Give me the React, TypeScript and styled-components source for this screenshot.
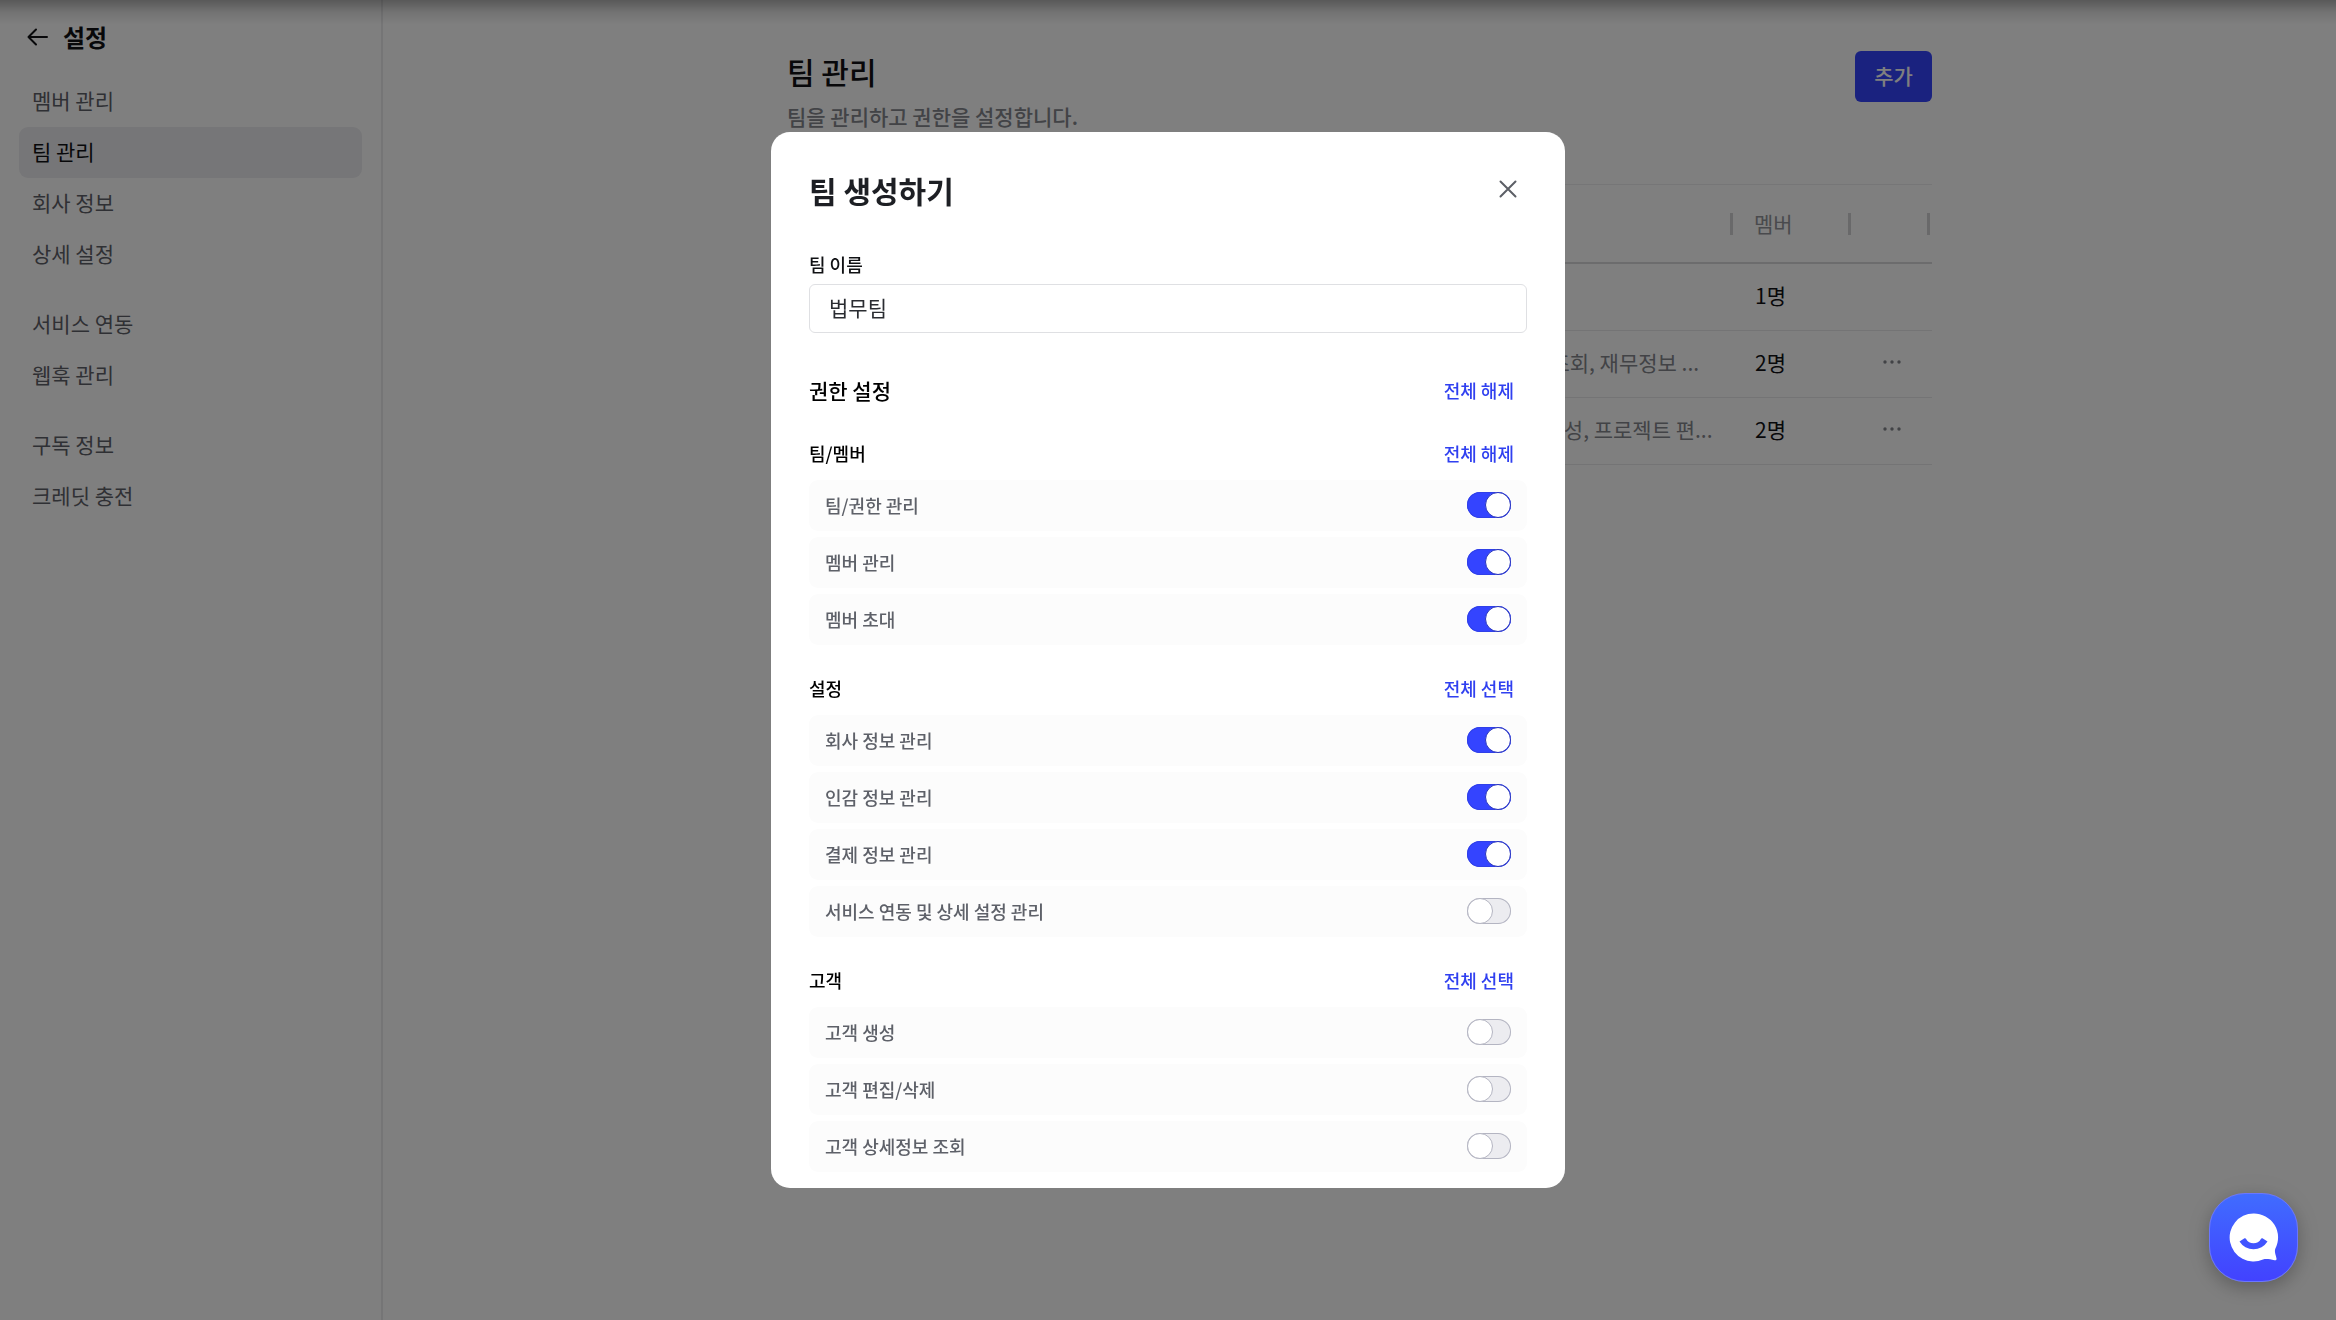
import React, { useState } from "react";
import styled, { createGlobalStyle } from "styled-components";

const GlobalStyle = createGlobalStyle`
  *, *::before, *::after { box-sizing: border-box; }
  body {
    margin: 0;
    background: #fff;
    color: #101114;
    font-family: "Noto Sans CJK KR", sans-serif;
    font-size: 21px;
    line-height: 30px;
    overflow: hidden;
  }
  h1, h2, h3, p, ul { margin: 0; padding: 0; }
  button, input { font: inherit; color: inherit; }
  button { border: 0; background: none; padding: 0; cursor: pointer; }
`;

const Page = styled.div`
  display: flex;
  min-height: 100vh;
`;

const Sidebar = styled.aside`
  flex: none;
  width: 383px;
  border-right: 2px solid #ebebed;
`;

const SidebarHeader = styled.header`
  display: flex;
  align-items: center;
  gap: 8px;
  height: 76px;
  padding: 0 21px 2px;
`;

const BackButton = styled.button`
  display: grid;
  place-items: center;
  width: 34px;
  height: 36px;
`;

const SidebarTitle = styled.h2`
  font-size: 24px;
  line-height: 36px;
  font-weight: 700;
`;

const Nav = styled.nav`
  display: flex;
  flex-direction: column;
  gap: 19px;
  padding: 0 19px;
`;

const NavGroup = styled.ul`
  list-style: none;
`;

const NavLink = styled.a<{ $active?: boolean }>`
  display: flex;
  align-items: center;
  height: 51px;
  padding: 0 13px 4px;
  border-radius: 9px;
  text-decoration: none;
  color: ${(p) => (p.$active ? "#101114" : "#5f6169")};
  background: ${(p) => (p.$active ? "#ededf0" : "transparent")};
`;

const Main = styled.main`
  flex: 1;
  min-width: 0;
  padding: 50px 24px 0;
`;

const Content = styled.div`
  max-width: 1145px;
  margin: 0 auto;
`;

const PageHeader = styled.header`
  display: flex;
  align-items: flex-start;
  justify-content: space-between;
  height: 134px;
`;

const PageTitle = styled.h1`
  font-size: 30px;
  line-height: 43px;
  font-weight: 500;
`;

const Description = styled.p`
  line-height: 46px;
  font-weight: 500;
  color: #84868d;
`;

const PrimaryButton = styled.button`
  width: 77px;
  height: 51px;
  margin-top: 1px;
  padding-bottom: 4px;
  border-radius: 6px;
  background: #3444ff;
  color: #fff;
  font-weight: 500;
`;

const Table = styled.table`
  width: 100%;
  table-layout: fixed;
  border-collapse: separate;
  border-spacing: 0;
  border-top: 1px solid #ececee;
`;

const HeadCell = styled.th<{ $width?: number }>`
  position: relative;
  width: ${(p) => (p.$width ? `${p.$width}px` : "auto")};
  height: 79px;
  padding: 0 19px 2px;
  border-bottom: 2px solid #d8d8db;
  text-align: left;
  font-weight: 400;
  color: #93959b;
  &::after {
    content: "";
    position: absolute;
    top: 28px;
    right: 2px;
    width: 3px;
    height: 22px;
    background: #d2d2d5;
  }
`;

const Cell = styled.td<{ $muted?: boolean }>`
  height: 67px;
  padding: 0 20px 4px;
  border-bottom: 1px solid #e8e8eb;
  white-space: nowrap;
  color: ${(p) => (p.$muted ? "#84868d" : "#101114")};
`;

const MoreButton = styled.button`
  display: grid;
  place-items: center;
  width: 38px;
  height: 38px;
  color: #84868d;
`;

const Overlay = styled.div`
  position: fixed;
  inset: 0;
  display: grid;
  place-items: center;
  background: rgba(0, 0, 0, 0.5);
  &::before {
    content: "";
    position: absolute;
    inset: 0 0 auto;
    height: 24px;
    background: linear-gradient(rgba(0, 0, 0, 0.3), rgba(0, 0, 0, 0.1) 50%, transparent);
  }
`;

const Dialog = styled.section`
  width: 794px;
  max-width: 100%;
  height: 80vh;
  padding: 36px 38px 16px;
  border-radius: 19px;
  background: #fff;
  overflow-y: auto;
  scrollbar-width: none;
`;

const DialogHeader = styled.header`
  display: flex;
  align-items: flex-start;
  justify-content: space-between;
  height: 81px;
`;

const DialogTitle = styled.h2`
  font-size: 30px;
  line-height: 44px;
  font-weight: 700;
  color: #1d1f24;
`;

const CloseButton = styled.button`
  display: grid;
  place-items: center;
  width: 38px;
  height: 42px;
  color: #5c5f66;
`;

const Field = styled.div`
  display: flex;
  flex-direction: column;
  gap: 5px;
  margin-bottom: 39px;
`;

const FieldLabel = styled.label`
  font-size: 18px;
  line-height: 30px;
  font-weight: 500;
`;

const TextInput = styled.input`
  width: 100%;
  height: 49px;
  padding: 0 19px 3px;
  border: 1px solid #dfe0e3;
  border-radius: 6px;
  outline: none;
  background: #fff;
  color: #2a2c31;
`;

const Sections = styled.div`
  display: flex;
  flex-direction: column;
  gap: 25px;
`;

const Section = styled.section`
  display: flex;
  flex-direction: column;
  gap: 7px;
`;

const SectionHeader = styled.header`
  display: flex;
  align-items: center;
  justify-content: space-between;
  height: 38px;
  padding: 0 13px 2px 0;
`;

const SectionTitle = styled.h3<{ $large?: boolean }>`
  font-size: ${(p) => (p.$large ? 21 : 18)}px;
  line-height: 30px;
  font-weight: 500;
  color: #000;
`;

const TextButton = styled.button`
  font-size: 18px;
  font-weight: 500;
  color: #3040f0;
`;

const PermissionList = styled.ul`
  display: flex;
  flex-direction: column;
  gap: 6px;
  list-style: none;
`;

const PermissionRow = styled.li`
  height: 51px;
  border-radius: 9px;
  background: #fcfcfc;
`;

const PermissionLabel = styled.label`
  display: flex;
  align-items: center;
  justify-content: space-between;
  height: 50px;
  padding: 0 16px;
  font-size: 18px;
  font-weight: 500;
  color: #5e6169;
`;

const Switch = styled.input`
  appearance: none;
  position: relative;
  flex: none;
  width: 44px;
  height: 26px;
  margin: 0;
  border-radius: 13px;
  background: #ececf0;
  box-shadow: inset 0 0 0 1px #b4b5c2;
  cursor: pointer;
  &::before {
    content: "";
    position: absolute;
    inset: 0 auto 0 0;
    width: 26px;
    border: 1px solid #b4b5c2;
    border-radius: 50%;
    background: #fff;
  }
  &:checked {
    background: #3444ff;
    box-shadow: inset 0 0 0 1px #3040e8;
  }
  &:checked::before {
    inset: 0 0 0 auto;
    border-color: #2733bd;
  }
`;

const Launcher = styled.button`
  position: fixed;
  right: 38px;
  bottom: 38px;
  width: 89px;
  height: 89px;
  border: 1px solid #6a76ff;
  border-radius: 36px;
  background: linear-gradient(#406cff, #4242ff);
  box-shadow: 0 6px 18px rgba(0, 0, 0, 0.22), 0 2px 30px rgba(0, 0, 0, 0.06);
  display: grid;
  place-items: center;
`;

const navGroups = [
  ["멤버 관리", "팀 관리", "회사 정보", "상세 설정"],
  ["서비스 연동", "웹훅 관리"],
  ["구독 정보", "크레딧 충전"],
];

const teams = [
  { name: "관리자", permissions: "전체 권한", members: 1, editable: false },
  {
    name: "재무팀",
    permissions: "멤버 관리, 고객 생성, 고객 상세정보 조회, 재무정보 ...",
    members: 2,
    editable: true,
  },
  {
    name: "운영팀",
    permissions: "서비스 연동 및 설정 관리, 프로젝트 생성, 프로젝트 편...",
    members: 2,
    editable: true,
  },
];

const initialSections = [
  {
    title: "팀/멤버",
    items: [
      { name: "팀/권한 관리", on: true },
      { name: "멤버 관리", on: true },
      { name: "멤버 초대", on: true },
    ],
  },
  {
    title: "설정",
    items: [
      { name: "회사 정보 관리", on: true },
      { name: "인감 정보 관리", on: true },
      { name: "결제 정보 관리", on: true },
      { name: "서비스 연동 및 상세 설정 관리", on: false },
    ],
  },
  {
    title: "고객",
    items: [
      { name: "고객 생성", on: false },
      { name: "고객 편집/삭제", on: false },
      { name: "고객 상세정보 조회", on: false },
    ],
  },
];

const ArrowLeftIcon = () => (
  <svg width="22" height="18" viewBox="0 0 22 18" fill="none" stroke="#101114" strokeWidth="2" strokeLinecap="round" strokeLinejoin="round" aria-hidden="true">
    <path d="M20 9H1.500M9 1.500L1.500 9l7.500 7.500" />
  </svg>
);

const CloseIcon = () => (
  <svg width="20" height="20" viewBox="0 0 20 20" fill="none" stroke="currentColor" strokeWidth="2" strokeLinecap="round" aria-hidden="true">
    <path d="M2.500 2.500l15 15M17.500 2.500l-15 15" />
  </svg>
);

const MoreIcon = () => (
  <svg width="20" height="4" viewBox="0 0 20 4" fill="currentColor" aria-hidden="true">
    <circle cx="3" cy="2" r="1.7" />
    <circle cx="10" cy="2" r="1.7" />
    <circle cx="17" cy="2" r="1.7" />
  </svg>
);

const ChatIcon = () => (
  <svg width="50" height="50" viewBox="0 0 50 50" aria-hidden="true">
    <path
      fill="#fff"
      d="M24.500.500a24 24 0 1 0 9.500 46.100c3-1 6.500-.4 11.500.7 1.400.3 2.300-.4 2-1.800-.8-4-2.300-6.600-1.200-9.800A24 24 0 0 0 24.500.500Z"
    />
    <path fill="#4154ff" d="M10.500 28.500l5-3.200q1-.5 1.600.6a8.500 8.500 0 0 0 14.800 0q.6-1.100 1.600-.6l5 3.200a16.500 16.500 0 0 1-28 0Z" />
  </svg>
);

export default function App() {
  const [teamName, setTeamName] = useState("법무팀");
  const [sections, setSections] = useState(initialSections);

  const setItem = (title: string, name: string | null, on: boolean) =>
    setSections((current) =>
      current.map((section) =>
        section.title !== title
          ? section
          : {
              ...section,
              items: section.items.map((item) =>
                name === null || item.name === name ? { ...item, on } : item
              ),
            }
      )
    );

  const clearAll = () =>
    setSections((current) =>
      current.map((s) => ({ ...s, items: s.items.map((i) => ({ ...i, on: false })) }))
    );

  return (
    <>
      <GlobalStyle />
      <Page>
        <Sidebar>
          <SidebarHeader>
            <BackButton type="button" aria-label="뒤로">
              <ArrowLeftIcon />
            </BackButton>
            <SidebarTitle>설정</SidebarTitle>
          </SidebarHeader>
          <Nav>
            {navGroups.map((group) => (
              <NavGroup key={group[0]}>
                {group.map((item) => (
                  <li key={item}>
                    <NavLink href="#" $active={item === "팀 관리"}>
                      {item}
                    </NavLink>
                  </li>
                ))}
              </NavGroup>
            ))}
          </Nav>
        </Sidebar>
        <Main>
          <Content>
            <PageHeader>
              <div>
                <PageTitle>팀 관리</PageTitle>
                <Description>팀을 관리하고 권한을 설정합니다.</Description>
              </div>
              <PrimaryButton type="button">추가</PrimaryButton>
            </PageHeader>
            <Table>
              <thead>
                <tr>
                  <HeadCell $width={433}>팀</HeadCell>
                  <HeadCell>권한</HeadCell>
                  <HeadCell $width={118}>멤버</HeadCell>
                  <HeadCell $width={79} aria-label="더보기" />
                </tr>
              </thead>
              <tbody>
                {teams.map((team) => (
                  <tr key={team.name}>
                    <Cell>{team.name}</Cell>
                    <Cell $muted>{team.permissions}</Cell>
                    <Cell>{team.members}명</Cell>
                    <Cell>
                      {team.editable && (
                        <MoreButton type="button" aria-label={`${team.name} 더보기`}>
                          <MoreIcon />
                        </MoreButton>
                      )}
                    </Cell>
                  </tr>
                ))}
              </tbody>
            </Table>
          </Content>
        </Main>
      </Page>

      <Overlay>
        <Dialog role="dialog" aria-modal="true" aria-labelledby="dialog-title">
          <DialogHeader>
            <DialogTitle id="dialog-title">팀 생성하기</DialogTitle>
            <CloseButton type="button" aria-label="닫기">
              <CloseIcon />
            </CloseButton>
          </DialogHeader>
          <Field>
            <FieldLabel htmlFor="team-name">팀 이름</FieldLabel>
            <TextInput
              id="team-name"
              type="text"
              value={teamName}
              onChange={(e) => setTeamName(e.target.value)}
            />
          </Field>
          <Sections>
            <SectionHeader>
              <SectionTitle $large>권한 설정</SectionTitle>
              <TextButton type="button" onClick={clearAll}>
                전체 해제
              </TextButton>
            </SectionHeader>
            {sections.map((section) => {
              const allOn = section.items.every((item) => item.on);
              return (
                <Section key={section.title}>
                  <SectionHeader>
                    <SectionTitle>{section.title}</SectionTitle>
                    <TextButton type="button" onClick={() => setItem(section.title, null, !allOn)}>
                      {allOn ? "전체 해제" : "전체 선택"}
                    </TextButton>
                  </SectionHeader>
                  <PermissionList>
                    {section.items.map((item) => (
                      <PermissionRow key={item.name}>
                        <PermissionLabel>
                          {item.name}
                          <Switch
                            type="checkbox"
                            role="switch"
                            checked={item.on}
                            onChange={(e) => setItem(section.title, item.name, e.target.checked)}
                          />
                        </PermissionLabel>
                      </PermissionRow>
                    ))}
                  </PermissionList>
                </Section>
              );
            })}
          </Sections>
        </Dialog>
      </Overlay>

      <Launcher type="button" aria-label="채팅 상담">
        <ChatIcon />
      </Launcher>
    </>
  );
}
